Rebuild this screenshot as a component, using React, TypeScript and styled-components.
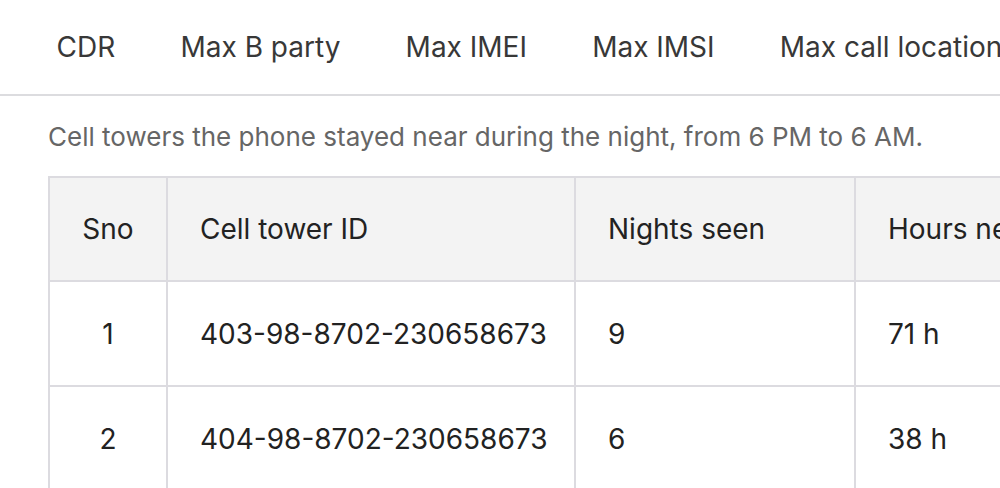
import styled, { createGlobalStyle } from "styled-components";

const GlobalStyle = createGlobalStyle`
  html, body {
    margin: 0;
    padding: 0;
    background: #ffffff;
    overflow: hidden;
  }
  body {
    font-family: Inter, "Noto Sans", sans-serif;
    color: #222222;
  }
`;

const Page = styled.div`
  width: 1000px;
  height: 488px;
  overflow: hidden;
`;

const TabBar = styled.nav`
  display: flex;
  height: 94px;
  padding-left: 24px;
  border-bottom: 2px solid #dcdcdf;
  white-space: nowrap;
`;

const Tab = styled.button<{ $active?: boolean }>`
  display: flex;
  align-items: center;
  flex-shrink: 0;
  padding: 0 32.6px;
  border: none;
  background: none;
  font-family: inherit;
  font-size: 28px;
  color: ${(props) => (props.$active ? "#111111" : "#383838")};
  cursor: pointer;
`;

const Content = styled.section`
  padding: 0 0 0 48px;
`;

const Description = styled.p`
  margin: 0;
  height: 80px;
  display: flex;
  align-items: center;
  font-size: 26px;
  color: #666666;
  white-space: nowrap;
`;

const Table = styled.table`
  border-collapse: collapse;
  table-layout: fixed;
  width: 1400px;
  font-size: 28px;
  color: #222222;
`;

const HeadCell = styled.th<{ $center?: boolean }>`
  height: 102px;
  padding: 0 32px;
  background: #f3f3f3;
  border: 2px solid #dcdbe0;
  font-weight: 400;
  text-align: ${(props) => (props.$center ? "center" : "left")};
  white-space: nowrap;
`;

const Cell = styled.td<{ $center?: boolean }>`
  height: 103px;
  padding: 0 32px;
  border: 2px solid #dcdbe0;
  text-align: ${(props) => (props.$center ? "center" : "left")};
  white-space: nowrap;
`;

const tabs = ["CDR", "Max B party", "Max IMEI", "Max IMSI", "Max call location"];

const rows = [
  { sno: 1, tower: "403-98-8702-230658673", nights: 9, hours: "71 h" },
  { sno: 2, tower: "404-98-8702-230658673", nights: 6, hours: "38 h" },
  { sno: 3, tower: "405-98-8702-230658673", nights: 4, hours: "22 h" },
];

export default function App() {
  return (
    <Page>
      <GlobalStyle />
      <TabBar>
        {tabs.map((t) => (
          <Tab key={t}>{t}</Tab>
        ))}
      </TabBar>
      <Content>
        <Description>
          Cell towers the phone stayed near during the night, from 6 PM to 6 AM.
        </Description>
        <Table>
          <colgroup>
            <col style={{ width: 118 }} />
            <col style={{ width: 408 }} />
            <col style={{ width: 280 }} />
            <col style={{ width: 594 }} />
          </colgroup>
          <thead>
            <tr>
              <HeadCell $center>Sno</HeadCell>
              <HeadCell>Cell tower ID</HeadCell>
              <HeadCell>Nights seen</HeadCell>
              <HeadCell>Hours near tower</HeadCell>
            </tr>
          </thead>
          <tbody>
            {rows.map((r) => (
              <tr key={r.sno}>
                <Cell $center>{r.sno}</Cell>
                <Cell>{r.tower}</Cell>
                <Cell>{r.nights}</Cell>
                <Cell>{r.hours}</Cell>
              </tr>
            ))}
          </tbody>
        </Table>
      </Content>
    </Page>
  );
}
